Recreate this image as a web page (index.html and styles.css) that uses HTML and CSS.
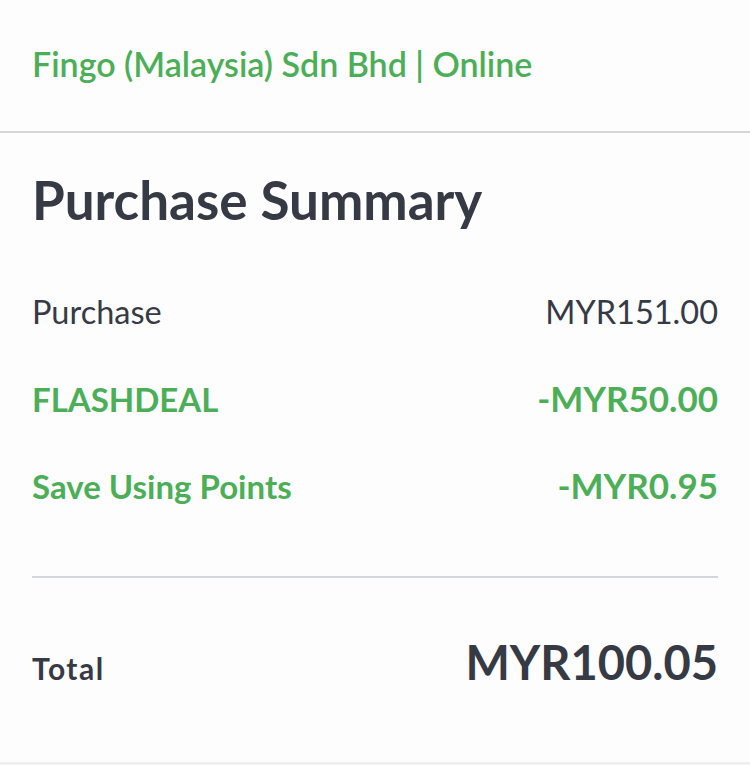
FILE: index.html
```html
<!DOCTYPE html>
<html>
<head>
<meta charset="utf-8">
<link rel="stylesheet" href="styles.css">
</head>
<body>
<div class="merchant">
  <div class="merchant-name">Fingo (Malaysia) Sdn Bhd | Online</div>
</div>
<div class="summary">
  <h1 class="title">Purchase Summary</h1>
  <div class="rows">
    <div class="row"><span>Purchase</span><span>MYR151.00</span></div>
    <div class="row promo"><span>FLASHDEAL</span><span class="amount">-MYR50.00</span></div>
    <div class="row promo"><span>Save Using Points</span><span class="amount">-MYR0.95</span></div>
  </div>
  <div class="divider"></div>
  <div class="total"><span class="total-label">Total</span><span class="total-value">MYR100.05</span></div>
</div>
<div class="footer-band"></div>
</body>
</html>
```
FILE: styles.css
```css
html, body {
  margin: 0;
  padding: 0;
  background: #fdfdfd;
  font-family: Lato, "Open Sans", sans-serif;
  color: #363a45;
}
.merchant {
  border-bottom: 2px solid #d3d7db;
  box-sizing: border-box;
  height: 133px;
  padding: 0 32px;
  display: flex;
  align-items: flex-start;
}
.merchant-name {
  margin-top: 43px;
  font-size: 34px;
  line-height: 42px;
  font-weight: 600;
  color: #4caf58;
}
.summary {
  padding: 0 32px;
  height: 629px;
  box-sizing: border-box;
}
.title {
  margin: 0;
  padding-top: 37px;
  font-size: 53px;
  line-height: 60px;
  font-weight: 700;
  color: #363a45;
}
.rows {
  margin-top: 62px;
  display: flex;
  flex-direction: column;
  gap: 46px;
}
.row {
  display: flex;
  justify-content: space-between;
  align-items: baseline;
  font-size: 32.5px;
  line-height: 40px;
  color: #363a45;
}
.row.promo {
  color: #4caf58;
  font-weight: 700;
  font-size: 33px;
}
.row .amount {
  font-size: 35px;
}
.divider {
  margin-top: 70px;
  height: 2px;
  background: #d3d7db;
}
.total {
  margin-top: 56px;
  display: flex;
  justify-content: space-between;
  align-items: baseline;
}
.total-label {
  font-size: 30px;
  font-weight: 700;
  letter-spacing: 1.5px;
  line-height: 40px;
}
.total-value {
  font-size: 47px;
  font-weight: 700;
  line-height: 56px;
}
.footer-band {
  height: 10px;
  background: #efefef;
}
```
